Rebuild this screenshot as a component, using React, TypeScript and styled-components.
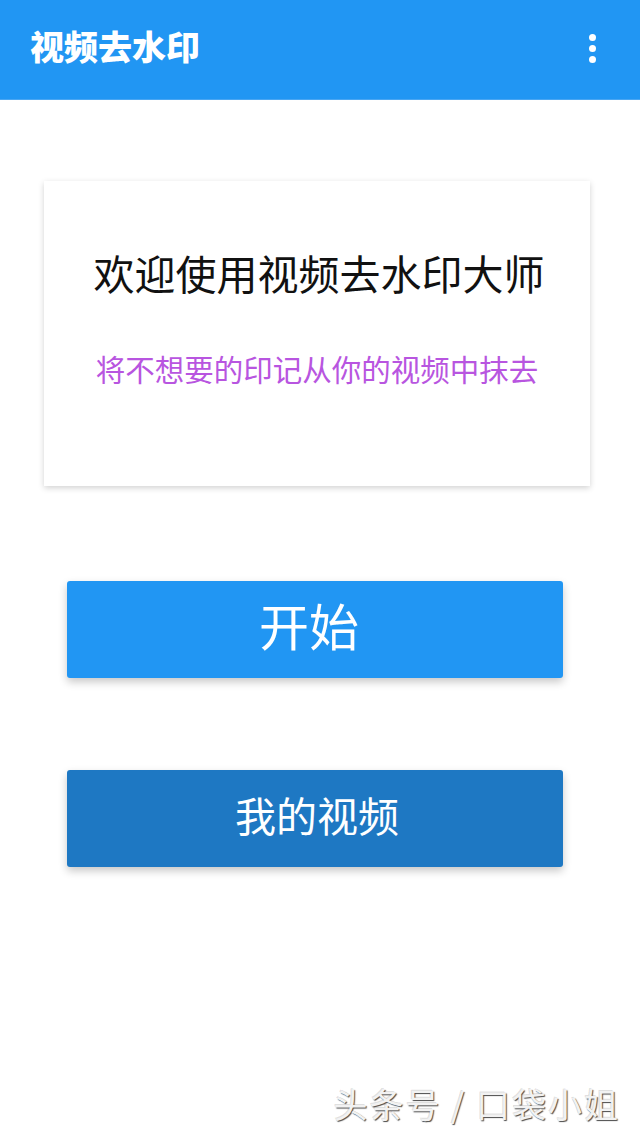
import styled, { createGlobalStyle } from 'styled-components';

const GlobalStyle = createGlobalStyle`
  html, body {
    margin: 0;
    padding: 0;
    background: #ffffff;
  }
  body {
    font-family: 'Noto Sans CJK SC', 'Noto Sans', sans-serif;
  }
`;

const Page = styled.div`
  width: 640px;
  height: 1138px;
  display: flex;
  flex-direction: column;
  overflow: hidden;
  background: #ffffff;
`;

const AppBar = styled.header`
  height: 100px;
  flex-shrink: 0;
  background: #2196f3;
  display: flex;
  align-items: center;
  justify-content: space-between;
  padding: 0 44px 0 30px;
  box-sizing: border-box;
  border-bottom: 1px solid #4aa6f2;
`;

const AppTitle = styled.h1`
  margin: 0 0 8px 0;
  color: #ffffff;
  font-size: 34px;
  font-weight: 900;
  font-family: 'Noto Sans CJK SC', sans-serif;
`;

const MoreButton = styled.div`
  display: flex;
  flex-direction: column;
  gap: 4px;
  margin-bottom: 2px;

  span {
    width: 7px;
    height: 7px;
    border-radius: 50%;
    background: #ffffff;
  }
`;

const Content = styled.main`
  flex: 1;
  display: flex;
  flex-direction: column;
  align-items: center;
  padding-top: 81px;
`;

const Card = styled.section`
  width: 546px;
  height: 305px;
  margin-right: 6px;
  box-sizing: border-box;
  background: #ffffff;
  box-shadow: 0 2px 6px rgba(0, 0, 0, 0.18);
  display: flex;
  flex-direction: column;
  align-items: center;
  padding-top: 65px;
`;

const CardTitle = styled.div`
  font-size: 41px;
  line-height: 52px;
  color: #111111;
  font-weight: 400;
  margin-left: 4px;
`;

const CardSubtitle = styled.div`
  margin-top: 50px;
  font-size: 29.5px;
  line-height: 40px;
  color: #b855e0;
`;

const Button = styled.button<{ $dark?: boolean; $big?: boolean }>`
  width: 496px;
  height: 97px;
  border: none;
  border-radius: 3px;
  background: ${({ $dark }) => ($dark ? '#1e78c3' : '#2196f3')};
  color: #ffffff;
  font-family: 'Noto Sans CJK SC', sans-serif;
  font-size: ${({ $big }) => ($big ? '50px' : '41px')};
  box-shadow: 0 4px 8px rgba(0, 0, 0, 0.22);
  display: flex;
  align-items: center;
  justify-content: center;
  padding: 0 0 12px 0;
  margin-right: 10px;
  cursor: pointer;
`;

const StartButton = styled(Button)`
  margin-top: 95px;
  padding-right: 12px;
`;

const VideoButton = styled(Button)`
  margin-top: 92px;
  padding-bottom: 10px;
  padding-left: 4px;
`;

const Watermark = styled.div`
  align-self: flex-end;
  margin: auto 20px 10px 0;
  font-size: 34px;
  letter-spacing: 2px;
  color: #f2f2f2;
  text-shadow: 1px 1px 1px #4a4a4a, -1px -1px 0 rgba(0, 0, 0, 0.12);
`;

export default function App() {
  return (
    <Page>
      <GlobalStyle />
      <AppBar>
        <AppTitle>视频去水印</AppTitle>
        <MoreButton>
          <span />
          <span />
          <span />
        </MoreButton>
      </AppBar>
      <Content>
        <Card>
          <CardTitle>欢迎使用视频去水印大师</CardTitle>
          <CardSubtitle>将不想要的印记从你的视频中抹去</CardSubtitle>
        </Card>
        <StartButton $big>开始</StartButton>
        <VideoButton $dark>我的视频</VideoButton>
        <Watermark>头条号 / 口袋小姐</Watermark>
      </Content>
    </Page>
  );
}
